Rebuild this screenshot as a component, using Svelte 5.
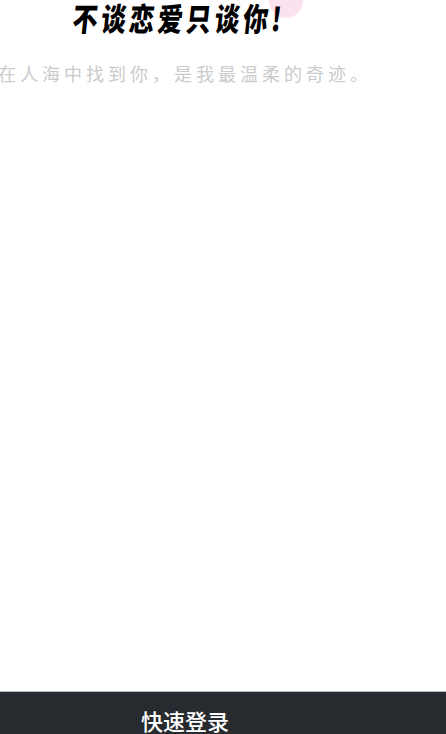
<script lang="ts">
  const title = '不谈恋爱只谈你!';
  const slogan = '在人海中找到你\uFF0C是我最温柔的奇迹。';
</script>

<div class="page">
  <main class="hero">
    <div class="heading">
      <span class="dot"></span>
      <h1>{title}</h1>
    </div>
    <p class="slogan">{slogan}</p>
  </main>
  <button class="login">快速登录</button>
</div>

<style>
  :global(body) {
    margin: 0;
    background: #fff;
  }

  .page {
    display: flex;
    flex-direction: column;
    height: 734px;
    overflow: hidden;
    font-family: "Noto Sans CJK SC", "Noto Sans", sans-serif;
  }

  .hero {
    flex: 1;
  }

  .heading {
    position: relative;
    display: flex;
    padding-left: 73px;
  }

  /* pink blob behind the title, cut by the top of the page */
  .dot {
    position: absolute;
    left: 269px;
    top: -18px;
    width: 34px;
    height: 36px;
    border-radius: 50%;
    background: #fce1ef;
  }

  h1 {
    position: relative;
    margin: 0;
    font-size: 25px;
    line-height: 34px;
    font-weight: 900;
    letter-spacing: 3.4px;
    color: #000;
    white-space: nowrap;
    transform: skewX(-6deg) scaleY(1.28);
    transform-origin: left center;
  }

  .slogan {
    margin: 26px 0 0 -2px;
    font-size: 18px;
    line-height: 26px;
    font-weight: 400;
    letter-spacing: 4px;
    color: #cbcbcb;
    white-space: nowrap;
  }

  .login {
    flex: none;
    height: 43px;
    padding: 14px 0 0 141px;
    border: 0;
    border-top: 1px solid #b9babc;
    background: #272a2e;
    color: #fff;
    text-align: left;
    font: 500 22px/26px "Noto Sans CJK SC", "Noto Sans", sans-serif;
  }
</style>
